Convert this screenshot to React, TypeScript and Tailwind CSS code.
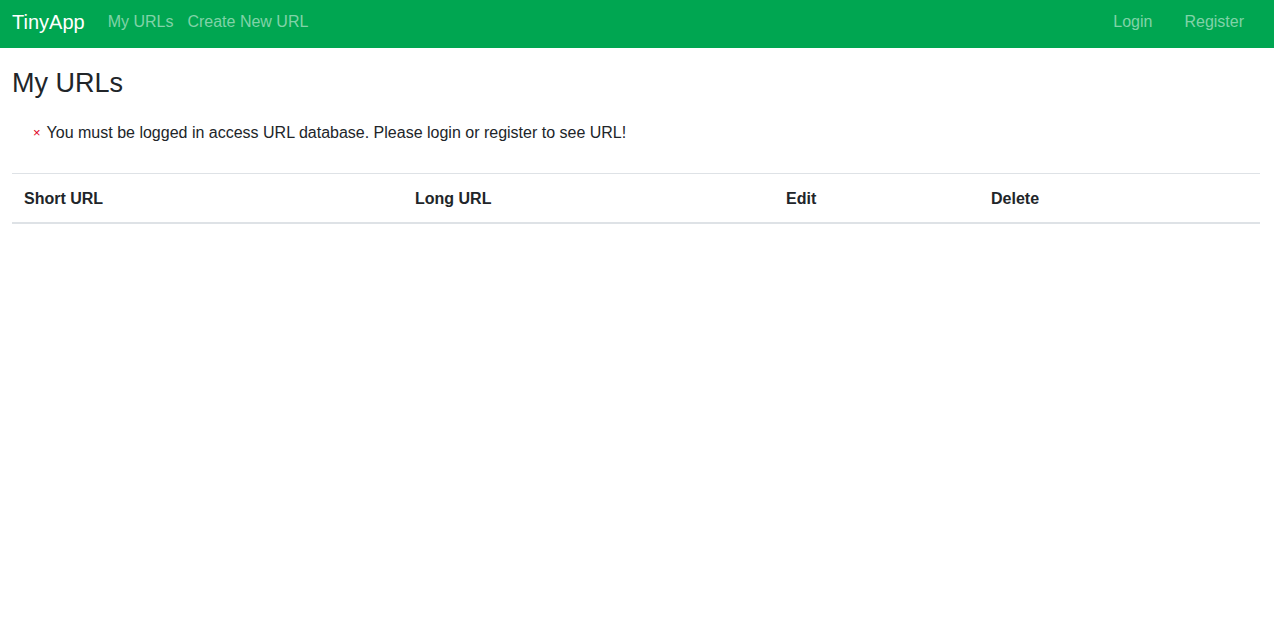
export default function App() {
  return (
    <div className="min-h-[643px] bg-white text-[#212529]" style={{ fontFamily: '"Liberation Sans", Arial, sans-serif' }}>
      <nav className="flex h-12 items-center bg-[#00a651] pb-1 pl-3 pr-[22px]">
        <span className="mr-[15px] text-[20px] leading-[30px] text-white">TinyApp</span>
        <div className="flex items-center">
          <span className="px-2 text-[16px] leading-6 text-[#80d3a8]">My URLs</span>
          <span className="pl-[6px] pr-2 text-[16px] leading-6 text-[#80d3a8]">Create New URL</span>
        </div>
        <div className="ml-auto flex items-center gap-4">
          <span className="px-2 text-[16px] leading-6 text-[#80d3a8]">Login</span>
          <span className="px-2 text-[16px] leading-6 text-[#80d3a8]">Register</span>
        </div>
      </nav>
      <div className="pl-3 pr-[14px]">
        <h3 className="mt-[18px] text-[27px] font-medium leading-[34px]">My URLs</h3>
        <div className="mt-[21px] flex items-center pl-[21px] text-[16px] leading-6">
          <span className="mr-[6px] text-[13px] text-[#e0001b]">×</span>
          <span>You must be logged in access URL database. Please login or register to see URL!</span>
        </div>
        <table className="mt-[28px] w-full border-collapse text-[16px] leading-6">
          <thead>
            <tr className="border-t border-[#dee2e6] border-b-2">
              <th className="w-[391px] px-3 pt-[13px] pb-[11px] text-left font-bold">Short URL</th>
              <th className="w-[371px] px-3 pt-[13px] pb-[11px] text-left font-bold">Long URL</th>
              <th className="w-[205px] px-3 pt-[13px] pb-[11px] text-left font-bold">Edit</th>
              <th className="px-3 pt-[13px] pb-[11px] text-left font-bold">Delete</th>
            </tr>
          </thead>
        </table>
      </div>
    </div>
  );
}
